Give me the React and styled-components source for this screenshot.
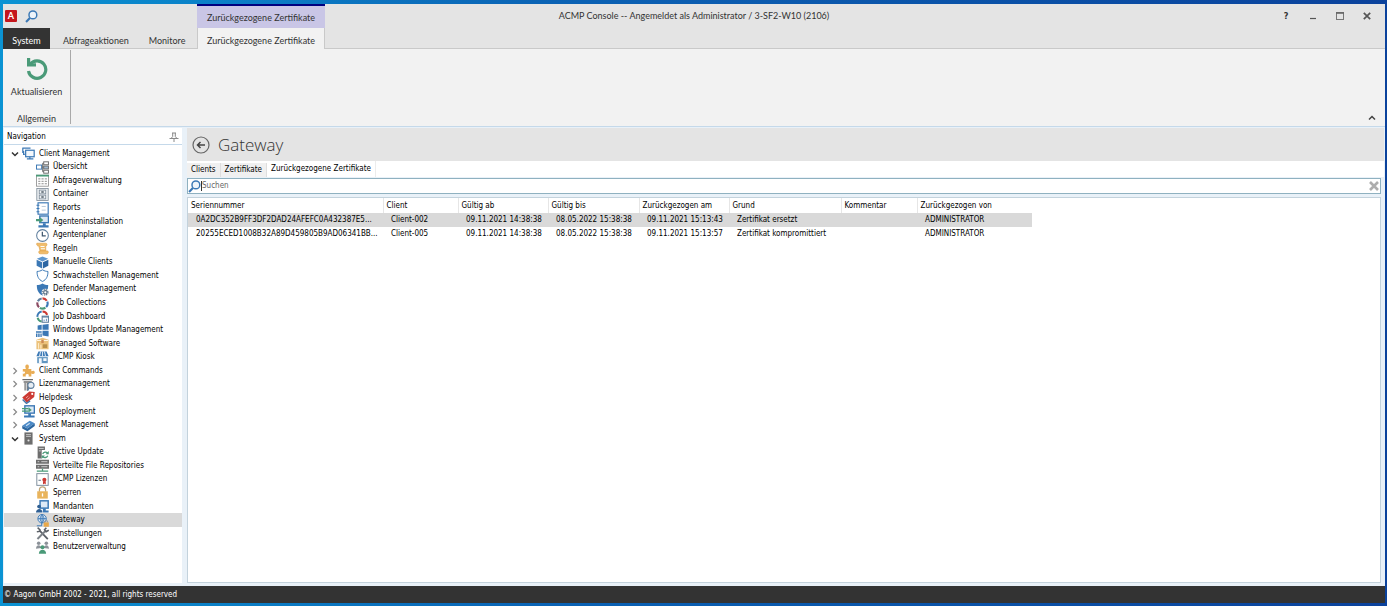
import React from 'react';
import styled, { createGlobalStyle } from 'styled-components';

const COLORS = {
  titleBar: '#e4e4e4',
  ribbon: '#f2f2f2',
  line: '#c9c9c9',
  frame: '#e9f1f8',
  frameLine: '#c5d9ea',
  dark: '#333333',
  text: '#000000',
  muted: '#666666',
  selected: '#d9d9d9',
  blue: '#3b78b5',
  steel: '#5f7f9e',
  grey: '#6d6d6d',
  green: '#4a9a78',
  amber: '#e9b45c',
  red: '#cc3a33',
};

const FONTS = {
  chrome: "Lato, 'Open Sans', sans-serif",
  body: "'DejaVu Sans Condensed', 'DejaVu Sans', sans-serif",
  heading: "'Open Sans', 'Noto Sans', sans-serif",
};

const ICONS = {
  clients: (
    <g fill="none" stroke={COLORS.blue} strokeWidth="1.5">
      <path d="M3.5 9H2V5M0.5 1.5h10M1 1v6.5" />
      <rect x="4.5" y="4" width="10.5" height="8" fill="#f4f8fc" />
      <path d="M9.7 12v2.5M6 14.7h8" />
    </g>
  ),
  overview: (
    <g fill="none" stroke={COLORS.grey} strokeWidth="1.2">
      <rect x="0.6" y="5" width="6.4" height="5" stroke={COLORS.blue} />
      <rect x="9.5" y="1" width="5.8" height="3.6" />
      <rect x="9.5" y="6.2" width="5.8" height="3.6" fill="#9fb9d2" />
      <rect x="9.5" y="11.4" width="5.8" height="3.6" />
      <path d="M7 7.5h2.5M8.2 2.8v10.4h1.3M8.2 2.8h1.3" />
    </g>
  ),
  query: (
    <g>
      <rect x="0.6" y="1.5" width="14.8" height="13.5" fill="#fff" stroke="#8b8b8b" />
      <path d="M0 2h16" stroke={COLORS.green} strokeWidth="2.2" />
      <path d="M2.8 6h11M2.8 9h11M2.8 12h11" stroke="#8b8b8b" strokeWidth="1.2" strokeDasharray="2.6 1.4" />
    </g>
  ),
  container: (
    <g fill="none" stroke="#7d8b98">
      <rect x="1" y="0.6" width="14" height="14.8" fill="#eef1f4" />
      <rect x="4" y="2.6" width="8" height="4.6" />
      <rect x="4" y="8.8" width="8" height="4.6" />
      <path d="M6.5 5h3M6.5 11.2h3" strokeWidth="1.8" stroke="#4f5b66" />
    </g>
  ),
  reports: (
    <g fill="none" stroke={COLORS.blue} strokeWidth="1.4">
      <rect x="2.5" y="1" width="12.5" height="14" fill="#fff" />
      <path d="M0.6 4h3.6M0.6 8h3.6M0.6 12h3.6" />
      <path d="M7 5.5h5M7 10h5" stroke="#a9bfd4" strokeWidth="1" />
    </g>
  ),
  install: (
    <g>
      <rect x="4.7" y="1.2" width="10.6" height="8.2" fill="#dce9f5" stroke={COLORS.blue} strokeWidth="1.7" />
      <path d="M8.5 10H12v3H8.5zM3 12.7h12.5v2.6H3z" fill={COLORS.blue} />
      <path d="M0 5h4.5V2.5L9 6.3 4.5 10V7.6H0z" fill={COLORS.green} />
    </g>
  ),
  clock: (
    <g fill="none" stroke={COLORS.steel} strokeWidth="1.3">
      <circle cx="8" cy="8" r="7.2" fill="#fff" />
      <path d="M7.8 3.5v5H12" stroke="#3d566e" strokeWidth="1.5" />
    </g>
  ),
  rules: (
    <g fill="#f0bd6c" stroke="#e0a24a" strokeWidth="0.8">
      <path d="M1 1.5h11c2 0 2 3.5 0 3.5v6H5L3.500 5C1 5 .5 3 1 1.500z" />
      <path d="M4 11h10.500c1.200 1.500.5 3.500-1 3.500H5c-1.800 0-2-2.500-1-3.500z" />
      <path d="M5.500 5.500h5M6 8.300h5" stroke="#fff" strokeWidth="1.200" />
    </g>
  ),
  cube: (
    <g>
      <path d="M8 .5l7 3-7 3.300-7-3.300z" fill="#5d96cf" />
      <path d="M.8 4.600l6.700 3.100v7.800L.8 12z" fill={COLORS.blue} />
      <path d="M15.200 4.600L8.500 7.700v7.800l6.700-3.500z" fill="#2c66a3" />
    </g>
  ),
  shield: (
    <path
      d="M8 1C5.500 2.500 3.500 3 1.300 3c0 6 1.700 10 6.700 12.300C13 13 14.700 9 14.700 3 12.500 3 10.500 2.500 8 1z"
      fill="#fff"
      stroke={COLORS.blue}
      strokeWidth="1.2"
    />
  ),
  defender: (
    <g>
      <path d="M8 .5C5.500 2 3.500 2.500 1 2.500c0 6 1.700 10.500 7 13 5-2.500 7-7 7-13C12.500 2.500 10.500 2 8 .5z" fill={COLORS.blue} />
      <circle cx="11.500" cy="11.500" r="4.500" fill="#fff" />
      <circle cx="11.500" cy="11.500" r="3.300" fill="none" stroke="#5c7388" strokeWidth="1.500" strokeDasharray="1.500 1.100" />
      <circle cx="11.500" cy="11.500" r="2.100" fill="none" stroke="#5c7388" strokeWidth="1.400" />
    </g>
  ),
  ring: (
    <g fill="none" strokeWidth="2.6">
      <path d="M8 1.700a6.300 6.300 0 0 1 5.300 2.900" stroke={COLORS.red} />
      <path d="M13.900 5.800a6.300 6.300 0 0 1-1.400 6.600" stroke={COLORS.blue} />
      <path d="M11.600 13.200a6.300 6.300 0 0 1-6.800.2" stroke={COLORS.green} />
      <path d="M3.700 12.600a6.300 6.300 0 0 1-1.900-6" stroke="#8b4a62" />
      <path d="M2.300 5.200A6.300 6.300 0 0 1 7 1.800" stroke={COLORS.steel} />
    </g>
  ),
  ringBoard: (
    <g>
      <g fill="none" strokeWidth="2.4">
        <path d="M8 1.800a6.200 6.200 0 0 1 5.800 4.200" stroke={COLORS.red} />
        <path d="M7 14.200A6.200 6.200 0 0 1 2 9.500" stroke={COLORS.green} />
        <path d="M1.800 8.500A6.200 6.200 0 0 1 7 1.800" stroke={COLORS.blue} />
      </g>
      <rect x="7.600" y="7.600" width="7.700" height="7.500" fill="#fff" stroke={COLORS.steel} strokeWidth="1.300" />
      <path d="M7.600 8.500h7.700" stroke={COLORS.steel} strokeWidth="1.600" />
      <path d="M10 13.800v-2M12.800 13.800v-3" stroke={COLORS.blue} />
    </g>
  ),
  windows: (
    <g fill={COLORS.blue}>
      <path d="M2 1.700L7 1v6H2zM8 .9L15.500 0v7H8zM8 8.200h7.500v7.300L8 14.300z" />
      <path d="M0 9h7v1.800H0zM0 11.800h1.800V16H0zM2.700 11.800h1.800V16H2.700zM5.400 11.800h1.600V16H5.400z" />
    </g>
  ),
  software: (
    <g>
      <path d="M.5 3.500L8 1l7.500 2.500V15H.5z" fill="#ecc27c" />
      <path d="M1 4.300h14" stroke="#fff6e4" strokeWidth="1.200" />
      <path d="M6.500 3.500v4h3v-4z" fill="#cc8a55" />
      <path d="M3.200 7.500v7M6 9.500v5" stroke="#fff0d0" strokeWidth="1.200" />
      <rect x="8.300" y="9" width="5.500" height="4.500" fill="#b98f4c" />
    </g>
  ),
  kiosk: (
    <g>
      <path d="M3 .5h10l2.500 6H.5z" fill={COLORS.blue} />
      <path d="M5.700.5l-1.500 6M10.300.5l1.500 6M8 .5v6" stroke="#d5e4f2" strokeWidth="1.300" />
      <path d="M1.500 7.500h13V15h-13z" fill="#5f95c0" />
      <path d="M3.500 9H7v6H3.500zM9 9h4v3.300H9z" fill="#f3f8fc" />
    </g>
  ),
  puzzle: (
    <path
      d="M1 6h3.800C3.300 2.500 4.300.5 6.300.5S9.300 2.500 7.800 6H11.500v3c2.700-1.500 4.200-.5 4.200 1.300s-1.500 2.900-4.200 1.300V15.500H8c1-2.500 0-3.300-1.500-3.300S4 13 4.800 15.500H1v-3.800c2 .6 2.700-.2 2.700-1.200S3 8.800 1 9.400z"
      fill="#e9ad55"
    />
  ),
  license: (
    <g fill="none" stroke={COLORS.grey}>
      <path d="M.5 2h13M2 4.800h10" strokeWidth="1.800" />
      <path d="M3.800 6v9.500M6.500 6v9.500" strokeWidth="1.500" />
      <circle cx="11" cy="9" r="3.800" fill="#e7eef4" stroke={COLORS.steel} strokeWidth="1.400" />
      <path d="M8.700 12l-2 3.500" stroke={COLORS.steel} strokeWidth="2" />
    </g>
  ),
  tag: (
    <g>
      <path d="M9 .5l6.700.8-.7 6.200-9 7L.3 8z" fill={COLORS.red} />
      <circle cx="12.600" cy="3.600" r="1.300" fill="#fff" />
      <path d="M.8 10.500l4.700 4.700L10 12.200" fill="none" stroke="#4c77a8" strokeWidth="1.800" />
      <path d="M4.800 8.500l3-2.300M6.500 10.500l3-2.300" stroke="#f2b8b4" />
    </g>
  ),
  deploy: (
    <g>
      <rect x="3.500" y="1" width="11.700" height="9" fill="#dce9f5" stroke={COLORS.blue} strokeWidth="1.7" />
      <path d="M7.700 10H11v3H7.700zM2.500 13h13v2.500h-13z" fill={COLORS.blue} />
      <path d="M0 4.500h8M0 7.500h8" stroke={COLORS.green} strokeWidth="1.600" />
      <path d="M8 2.800l4 3.200-4 3.200z" fill={COLORS.green} />
    </g>
  ),
  asset: (
    <g>
      <path d="M.3 8.300L9.500 2l6.200 3.300-9 6.500z" fill="#4c8ac7" />
      <path d="M.3 8.300l6.400 3.500v3.400L.3 11.700zM15.700 5.300v3.400l-9 6.500v-3.400z" fill="#2c669f" />
      <path d="M5 8.300l4.500-3" stroke="#cfe2f4" strokeWidth="1.300" />
    </g>
  ),
  server: (
    <g>
      <rect x="3" y="0.500" width="10" height="15" fill={COLORS.grey} />
      <path d="M5 3.200h6M5 5.400h6" stroke="#d8d8d8" />
      <circle cx="8" cy="10.500" r="1.300" fill="#e4e4e4" />
    </g>
  ),
  update: (
    <g>
      <path d="M2 .5h9V5H7v10.500H2z" fill={COLORS.grey} />
      <path d="M3.500 3h6M3.500 6h2.500" stroke="#ddd" />
      <path d="M14.300 8.700A3.800 3.800 0 0 0 8.200 9.700M8.300 13a3.800 3.800 0 0 0 6.200-1" fill="none" stroke={COLORS.green} strokeWidth="1.600" />
      <path d="M15.700 6.300v4h-4zM7 15.700v-4h4z" fill={COLORS.green} />
    </g>
  ),
  repos: (
    <g>
      <path d="M0 .8h16v5H0zM0 7h16v5H0z" fill={COLORS.grey} />
      <path d="M2 3.300h2M6.500 3.300H14M2 9.500h2M6.500 9.500H14" stroke="#e2e2e2" />
      <path d="M8 12v2.700M1 14.800h14" stroke={COLORS.green} strokeWidth="1.500" />
    </g>
  ),
  certificate: (
    <g>
      <rect x="1" y="0.800" width="14" height="14.400" fill="#fff" stroke="#7e8e9c" strokeWidth="1.200" />
      <path d="M3 9h3" stroke="#7e8e9c" strokeWidth="1.500" />
      <circle cx="10.300" cy="8.300" r="2.500" fill={COLORS.red} />
      <path d="M8.600 10v4l1.700-1 1.700 1v-4z" fill={COLORS.red} />
    </g>
  ),
  lock: (
    <g>
      <path d="M4.200 7V4.800a3.800 3.800 0 0 1 7.600 0V7" fill="none" stroke="#bfa67a" strokeWidth="1.500" />
      <rect x="1.500" y="6.500" width="13" height="9" fill={COLORS.amber} />
      <path d="M8 9v4" stroke="#fff" strokeWidth="1.600" />
    </g>
  ),
  tenant: (
    <g>
      <rect x="5" y="1" width="10" height="9" fill="#dfeaf6" stroke={COLORS.blue} strokeWidth="1.800" />
      <path d="M8.500 10.500H12V13h3.500v2.500H8.500z" fill={COLORS.blue} />
      <circle cx="3.800" cy="8" r="2.300" fill="#2f5f93" />
      <path d="M0 15.500c0-6 8-6 8 0z" fill="#2f5f93" />
    </g>
  ),
  gateway: (
    <g>
      <g fill="none" stroke={COLORS.blue} strokeWidth="1.2">
        <circle cx="7.500" cy="5.800" r="5.200" fill="#dfeaf6" />
        <path d="M2.500 5.800h10M7.500.8v10M7.500.8c-3 3-3 7 0 10M7.500.8c3 3 3 7 0 10" />
        <path d="M7 11v3.500H1" />
      </g>
      <rect x="9.500" y="10.300" width="6.300" height="5.400" fill="#e9a94a" />
      <path d="M11 10.300V8.500h3.300v1.800" fill="none" stroke="#8f8f8f" />
    </g>
  ),
  tools: (
    <g fill="none" stroke="#5a5f66">
      <path d="M4.500 4.500L14.500 15" strokeWidth="2.200" />
      <path d="M11.500 5L1.800 14.700" stroke="#7c8288" strokeWidth="2.400" />
      <path d="M2 .8L5 3.500 4.300 5.300 1 6" strokeWidth="1.800" />
      <path d="M12.700.8L10.500 3.500l2 2.300 3.200-2" strokeWidth="2" />
    </g>
  ),
  users: (
    <g>
      <circle cx="3.300" cy="2.800" r="2.200" fill="#8c9299" />
      <circle cx="12.700" cy="2.800" r="2.200" fill="#8c9299" />
      <path d="M0 9.500c0-5.500 6-5.500 6.500-1zM16 9.500c0-5.500-6-5.500-6.500-1z" fill="#8c9299" />
      <circle cx="8" cy="7.800" r="2.500" fill={COLORS.green} />
      <path d="M3.500 15.700c0-6.500 9-6.500 9 0z" fill={COLORS.green} />
    </g>
  ),
};

const TREE = [
  { label: 'Client Management', icon: 'clients', open: true },
  { label: 'Übersicht', icon: 'overview', child: true },
  { label: 'Abfrageverwaltung', icon: 'query', child: true },
  { label: 'Container', icon: 'container', child: true },
  { label: 'Reports', icon: 'reports', child: true },
  { label: 'Agenteninstallation', icon: 'install', child: true },
  { label: 'Agentenplaner', icon: 'clock', child: true },
  { label: 'Regeln', icon: 'rules', child: true },
  { label: 'Manuelle Clients', icon: 'cube', child: true },
  { label: 'Schwachstellen Management', icon: 'shield', child: true },
  { label: 'Defender Management', icon: 'defender', child: true },
  { label: 'Job Collections', icon: 'ring', child: true },
  { label: 'Job Dashboard', icon: 'ringBoard', child: true },
  { label: 'Windows Update Management', icon: 'windows', child: true },
  { label: 'Managed Software', icon: 'software', child: true },
  { label: 'ACMP Kiosk', icon: 'kiosk', child: true },
  { label: 'Client Commands', icon: 'puzzle' },
  { label: 'Lizenzmanagement', icon: 'license' },
  { label: 'Helpdesk', icon: 'tag' },
  { label: 'OS Deployment', icon: 'deploy' },
  { label: 'Asset Management', icon: 'asset' },
  { label: 'System', icon: 'server', open: true },
  { label: 'Active Update', icon: 'update', child: true },
  { label: 'Verteilte File Repositories', icon: 'repos', child: true },
  { label: 'ACMP Lizenzen', icon: 'certificate', child: true },
  { label: 'Sperren', icon: 'lock', child: true },
  { label: 'Mandanten', icon: 'tenant', child: true },
  { label: 'Gateway', icon: 'gateway', child: true, selected: true },
  { label: 'Einstellungen', icon: 'tools', child: true },
  { label: 'Benutzerverwaltung', icon: 'users', child: true },
];

const COLUMNS = [
  { label: 'Seriennummer', width: 195 },
  { label: 'Client', width: 75 },
  { label: 'Gültig ab', width: 90 },
  { label: 'Gültig bis', width: 91 },
  { label: 'Zurückgezogen am', width: 90 },
  { label: 'Grund', width: 112 },
  { label: 'Kommentar', width: 76 },
  { label: 'Zurückgezogen von', width: 115 },
];

const CERTIFICATES = [
  [
    '0A2DC352B9FF3DF2DAD24AFEFC0A432387E5...',
    'Client-002',
    '09.11.2021 14:38:38',
    '08.05.2022 15:38:38',
    '09.11.2021 15:13:43',
    'Zertifikat ersetzt',
    '',
    'ADMINISTRATOR',
  ],
  [
    '20255ECED1008B32A89D459805B9AD06341BB...',
    'Client-005',
    '09.11.2021 14:38:38',
    '08.05.2022 15:38:38',
    '09.11.2021 15:13:57',
    'Zertifikat kompromittiert',
    '',
    'ADMINISTRATOR',
  ],
];

const Magnifier = () => (
  <Glyph $size={13} viewBox="0 0 16 16" aria-hidden="true">
    <circle cx="9.700" cy="6" r="4.800" fill="#eef4fa" stroke={COLORS.blue} strokeWidth="1.8" />
    <path d="M6 9.800l-4.700 4.900" stroke={COLORS.blue} strokeWidth="2.6" />
  </Glyph>
);

const TreeItem = ({ item }) => (
  <TreeRow $child={item.child} $selected={item.selected}>
    {!item.child && (
      <IconButton aria-label={item.label + ' umschalten'} aria-expanded={!!item.open}>
        <Glyph $size={8} viewBox="0 0 8 8">
          {item.open ? (
            <path d="M1 2.500l3 3 3-3" fill="none" stroke="#333" strokeWidth="1.5" />
          ) : (
            <path d="M2.500 1l3 3-3 3" fill="none" stroke="#888" strokeWidth="1.2" />
          )}
        </Glyph>
      </IconButton>
    )}
    <TreeLink href="#">
      <Glyph $size={13} viewBox="0 0 16 16" aria-hidden="true">
        {ICONS[item.icon]}
      </Glyph>
      {item.label}
    </TreeLink>
  </TreeRow>
);

const TitleBar = () => (
  <TitleRow>
    <TitleStart>
      <QuickAccess>
        <Logo>A</Logo>
        <IconButton aria-label="Suche">
          <Magnifier />
        </IconButton>
      </QuickAccess>
      <ContextTitle>Zurückgezogene Zertifikate</ContextTitle>
    </TitleStart>
    <WindowTitle>ACMP Console -- Angemeldet als Administrator / 3-SF2-W10 (2106)</WindowTitle>
    <WindowControls>
      <HelpButton aria-label="Hilfe">?</HelpButton>
      <IconButton aria-label="Minimieren">
        <Glyph $size={8} viewBox="0 0 8 8">
          <path d="M1 6.500h6" stroke="#555" strokeWidth="1.2" />
        </Glyph>
      </IconButton>
      <IconButton aria-label="Maximieren">
        <Glyph $size={8} viewBox="0 0 8 8">
          <rect x="0.500" y="0.500" width="7" height="7" fill="none" stroke="#777" />
          <path d="M0 1h8" stroke="#666" strokeWidth="1.6" />
        </Glyph>
      </IconButton>
      <IconButton aria-label="Schließen">
        <Glyph $size={8} viewBox="0 0 8 8">
          <path d="M.8.8l6.400 6.400M7.200.8L.8 7.200" stroke="#555" strokeWidth="1.7" />
        </Glyph>
      </IconButton>
    </WindowControls>
  </TitleRow>
);

const Ribbon = () => (
  <RibbonPanel>
    <RibbonGroup>
      <RibbonButton>
        <Glyph $size={24} viewBox="0 0 24 24" aria-hidden="true">
          <path d="M5 7.500A8.700 8.700 0 1 1 3.500 14" fill="none" stroke={COLORS.green} strokeWidth="3.2" />
          <path d="M2 1h3.200v5.300H11v3.200H2z" fill={COLORS.green} />
        </Glyph>
        Aktualisieren
      </RibbonButton>
      <GroupCaption>Allgemein</GroupCaption>
    </RibbonGroup>
    <CollapseButton aria-label="Menüband reduzieren">
      <Glyph $size={8} viewBox="0 0 8 8">
        <path d="M1 5.500l3-3 3 3" fill="none" stroke="#444" strokeWidth="1.5" />
      </Glyph>
    </CollapseButton>
  </RibbonPanel>
);

const CertificateTable = () => (
  <Table>
    <colgroup>
      {COLUMNS.map((column) => (
        <Column key={column.label} $width={column.width} />
      ))}
    </colgroup>
    <thead>
      <tr>
        {COLUMNS.map((column) => (
          <HeaderCell key={column.label}>{column.label}</HeaderCell>
        ))}
      </tr>
    </thead>
    <tbody>
      {CERTIFICATES.map((cells, index) => (
        <DataRow key={cells[0]} $selected={index === 0}>
          {cells.map((cell, i) => (
            <DataCell key={COLUMNS[i].label}>{cell}</DataCell>
          ))}
        </DataRow>
      ))}
    </tbody>
  </Table>
);

const App = () => (
  <Desktop>
    <GlobalStyle />
    <AppWindow>
      <TitleBar />
      <RibbonTabs>
        <RibbonTabGroup>
          <SystemTab>System</SystemTab>
          <RibbonTab>Abfrageaktionen</RibbonTab>
          <RibbonTab>Monitore</RibbonTab>
        </RibbonTabGroup>
        <ActiveRibbonTab>Zurückgezogene Zertifikate</ActiveRibbonTab>
      </RibbonTabs>
      <Ribbon />
      <Workspace>
        <Sidebar>
          <SidebarHeader>
            Navigation
            <IconButton aria-label="Anheften">
              <Glyph $size={10} viewBox="0 0 10 10">
                <path d="M3 1h4M3.700 1v3.500L2 6.500h6L6.300 4.500V1M5 6.500V10M.5 6.500h9" fill="none" stroke="#888" />
              </Glyph>
            </IconButton>
          </SidebarHeader>
          <Tree>
            {TREE.map((item) => (
              <TreeItem key={item.label} item={item} />
            ))}
          </Tree>
        </Sidebar>
        <Content>
          <PageHeader>
            <IconButton aria-label="Zurück">
              <Glyph $size={18} viewBox="0 0 18 18">
                <circle cx="9" cy="9" r="8" fill="none" stroke="#666" strokeWidth="1.2" />
                <path d="M13 9H5.500M8.500 6L5.500 9l3 3" fill="none" stroke="#444" strokeWidth="1.5" />
              </Glyph>
            </IconButton>
            <Heading>Gateway</Heading>
          </PageHeader>
          <PageTabs>
            <PageTab>Clients</PageTab>
            <PageTab>Zertifikate</PageTab>
            <PageTab $active>Zurückgezogene Zertifikate</PageTab>
          </PageTabs>
          <PageBody>
            <SearchBar>
              <label htmlFor="search" aria-label="Suchen">
                <Magnifier />
              </label>
              <SearchInput id="search" placeholder="Suchen" />
              <IconButton aria-label="Suche löschen">
                <Glyph $size={10} viewBox="0 0 10 10">
                  <path d="M1 1l8 8M9 1L1 9" stroke="#adadad" strokeWidth="2.6" />
                </Glyph>
              </IconButton>
            </SearchBar>
            <GridPanel>
              <CertificateTable />
            </GridPanel>
          </PageBody>
        </Content>
      </Workspace>
      <StatusBar>© Aagon GmbH 2002 - 2021, all rights reserved</StatusBar>
    </AppWindow>
  </Desktop>
);

const GlobalStyle = createGlobalStyle`
  *, *::before, *::after {
    box-sizing: border-box;
  }

  body {
    margin: 0;
    color: ${COLORS.text};
    font-family: ${FONTS.body};
    font-size: 8px;
    line-height: 12px;
  }

  button, input {
    margin: 0;
    padding: 0;
    border: none;
    background: none;
    color: inherit;
    font: inherit;
  }

  a {
    color: inherit;
    text-decoration: none;
  }
`;

const Glyph = styled.svg`
  display: block;
  flex: none;
  width: ${(p) => p.$size}px;
  height: ${(p) => p.$size}px;
`;

const Desktop = styled.div`
  display: flex;
  min-height: 100vh;
  padding: 4px 2px 3px 3px;
  background: linear-gradient(90deg, #0b93d3, #0a62b4 40%, #0b429c);
`;

const AppWindow = styled.div`
  flex: 1;
  min-width: 0;
  display: flex;
  flex-direction: column;
  background: ${COLORS.frame};
`;

const IconButton = styled.button`
  display: grid;
  place-items: center;
`;

const TitleRow = styled.header`
  display: grid;
  grid-template-columns: 1fr auto 1fr;
  height: 24px;
  background: ${COLORS.titleBar};
  color: #333;
  font-family: ${FONTS.chrome};
  font-size: 9px;
`;

const TitleStart = styled.div`
  display: flex;
`;

const QuickAccess = styled.div`
  display: flex;
  align-items: center;
  gap: 8px;
  width: 194px;
  padding-left: 2px;
`;

const Logo = styled.span`
  width: 12px;
  border-radius: 1px;
  background: #c4161c;
  color: #fff;
  font-weight: 700;
  text-align: center;
`;

const ContextTitle = styled.div`
  width: 128px;
  height: 24px;
  padding-top: 6px;
  border-top: 2px solid #000080;
  background: #c9c6e6;
  text-align: center;
`;

const WindowTitle = styled.div`
  line-height: 24px;
`;

const WindowControls = styled.div`
  display: flex;
  justify-content: flex-end;
  align-items: center;
  gap: 19px;
  padding-right: 14px;
`;

const HelpButton = styled.button`
  width: 8px;
  font-family: ${FONTS.body};
  font-size: 9px;
  font-weight: 700;
`;

const RibbonTabs = styled.nav`
  display: flex;
  height: 21px;
  background: ${COLORS.titleBar};
  box-shadow: inset 0 -1px ${COLORS.line};
  color: #333;
  font-family: ${FONTS.chrome};
  font-size: 9px;
`;

const RibbonTabGroup = styled.div`
  display: flex;
  width: 194px;
`;

const RibbonTab = styled.button`
  padding: 4px 10px 0;
`;

const SystemTab = styled(RibbonTab)`
  width: 47px;
  margin-right: 3px;
  padding: 4px 0 0;
  background: ${COLORS.dark};
  color: #fff;
`;

const ActiveRibbonTab = styled(RibbonTab)`
  width: 128px;
  padding: 4px 0 0;
  border: 1px solid ${COLORS.line};
  border-width: 0 1px;
  background: ${COLORS.ribbon};
`;

const RibbonPanel = styled.div`
  display: flex;
  justify-content: space-between;
  height: 78px;
  border-bottom: 1px solid ${COLORS.frameLine};
  background: ${COLORS.ribbon};
  color: #333;
  font-family: ${FONTS.chrome};
  font-size: 9px;
`;

const RibbonGroup = styled.div`
  display: flex;
  flex-direction: column;
  justify-content: space-between;
  width: 68px;
  margin: 1px 0 2px;
  padding-top: 7px;
  border-right: 1px solid #a9a9a9;
  text-align: center;
`;

const RibbonButton = styled.button`
  display: flex;
  flex-direction: column;
  align-items: center;
  gap: 5px;
`;

const GroupCaption = styled.div`
  line-height: 10px;
`;

const CollapseButton = styled(IconButton)`
  align-self: flex-end;
  padding: 4px 9px;
`;

const Workspace = styled.div`
  flex: 1;
  display: flex;
  gap: 5px;
  padding: 1px 1px 3px;
`;

const Sidebar = styled.aside`
  width: 178px;
  background: #fff;
`;

const SidebarHeader = styled.div`
  display: flex;
  justify-content: space-between;
  align-items: center;
  height: 17px;
  padding: 2px 3px 0;
  border-bottom: 1px solid ${COLORS.frameLine};
`;

/* The rows share the height of the tree evenly */
const Tree = styled.ul`
  display: grid;
  grid-auto-rows: 1fr;
  height: 407px;
  margin: 2px 0 0;
  padding: 0;
  list-style: none;
`;

const TreeRow = styled.li`
  display: flex;
  align-items: center;
  gap: 3px;
  min-height: 0;
  padding-left: ${(p) => (p.$child ? 32 : 7)}px;
  background: ${(p) => (p.$selected ? COLORS.selected : 'transparent')};
`;

const TreeLink = styled.a`
  display: flex;
  align-items: center;
  gap: 4px;
  line-height: 14px;
  white-space: nowrap;
`;

const Content = styled.main`
  flex: 1;
  min-width: 0;
  display: flex;
  flex-direction: column;
`;

const PageHeader = styled.div`
  display: flex;
  align-items: center;
  gap: 8px;
  height: 33px;
  padding-left: 5px;
  background: ${COLORS.titleBar};
`;

const Heading = styled.h1`
  margin: 0;
  color: #333;
  font-family: ${FONTS.heading};
  font-size: 17px;
  font-weight: 300;
  line-height: 24px;
`;

const PageTabs = styled.div`
  display: flex;
  align-items: flex-end;
  height: 16px;
  background: #fff;
`;

const PageTab = styled.button`
  height: ${(p) => (p.$active ? 16 : 14)}px;
  padding: 0 4px;
  border-right: 1px solid ${(p) => (p.$active ? '#ececec' : '#dedede')};
  background: ${(p) => (p.$active ? '#fff' : '#f0f0f0')};
`;

const PageBody = styled.div`
  flex: 1;
  display: flex;
  flex-direction: column;
  gap: 3px;
  padding: 1px 3px 0 0;
`;

const SearchBar = styled.div`
  display: flex;
  align-items: center;
  height: 16px;
  padding: 0 1px 0 0;
  border: 1px solid #8fb1c0;
  background: #fff;
`;

const SearchInput = styled.input`
  flex: 1;
  min-width: 0;
  height: 10px;
  border-left: 1px solid #333;
  line-height: 10px;
  outline: none;

  &::placeholder {
    color: ${COLORS.muted};
    opacity: 1;
  }
`;

const GridPanel = styled.div`
  flex: 1;
  border: 1px solid #c3d2dc;
  background: #fff;
`;

const Table = styled.table`
  width: 844px;
  border-collapse: collapse;
  table-layout: fixed;
`;

const Column = styled.col`
  width: ${(p) => p.$width}px;
`;

const HeaderCell = styled.th`
  height: 15px;
  padding: 0 3px;
  border-right: 1px solid #e6e6e6;
  font-weight: 400;
  text-align: left;

  &:last-child {
    border-right: none;
  }
`;

const DataRow = styled.tr`
  background: ${(p) => (p.$selected ? COLORS.selected : '#fff')};
`;

const DataCell = styled.td`
  height: 14px;
  padding: 0 0 0 8px;
  overflow: hidden;
  white-space: nowrap;
`;

const StatusBar = styled.footer`
  height: 17px;
  padding-left: 1px;
  background: ${COLORS.dark};
  color: #fff;
  line-height: 17px;
`;

export default App;
